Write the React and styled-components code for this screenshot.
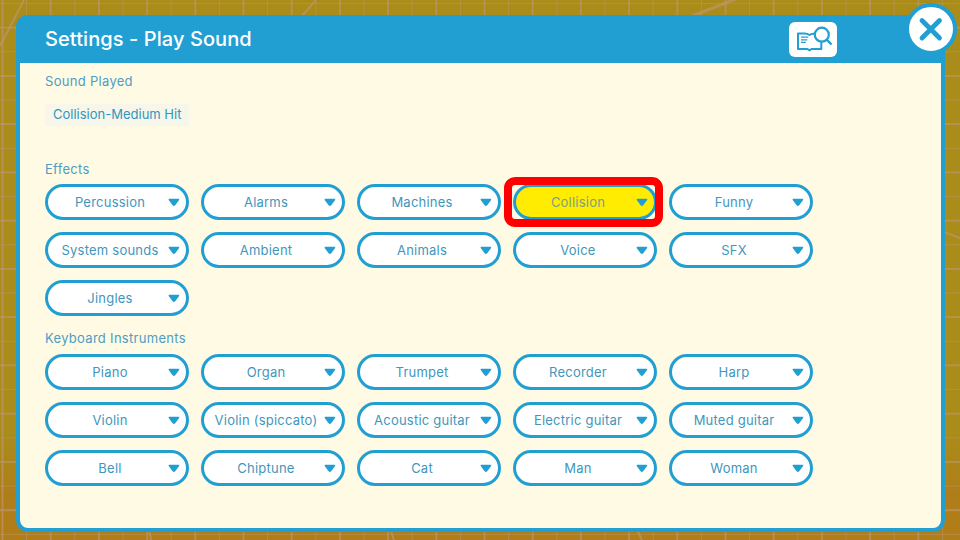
import React from "react";
import styled, { createGlobalStyle } from "styled-components";

const blue = "#219fd3";

const GlobalStyle = createGlobalStyle`
  * { box-sizing: border-box; }
  body { margin: 0; overflow: hidden; }
  button { font: inherit; padding: 0; }
`;

const Screen = styled.main`
  position: relative;
  width: 960px;
  height: 540px;
  padding: 15px 15px 8px 16px;
  background: linear-gradient(#aa8c1b 0%, #aa8c1b 80%, #b07d18 92%, #b07d18 100%);
  font-family: Inter, "Liberation Sans", sans-serif;
  overflow: hidden;
`;

const Backdrop = styled.svg`
  position: absolute;
  inset: 0;
`;

const Panel = styled.section`
  position: relative;
  height: 517px;
  display: flex;
  flex-direction: column;
  border: 4px solid ${blue};
  border-top: 0;
  border-radius: 12px;
  background: ${blue};
`;

const Header = styled.header`
  height: 48px;
  flex: none;
  display: flex;
  align-items: center;
  justify-content: space-between;
  padding: 0 104px 0 25px;
`;

const Title = styled.h1`
  margin: 0;
  color: #fff;
  font-size: 20px;
  line-height: 24px;
  font-weight: 450;
  letter-spacing: 0.08px;
`;

const GuideButton = styled.button`
  width: 48px;
  height: 35px;
  margin-top: 1px;
  border: 0;
  border-radius: 6px;
  background: #fff;
  svg { display: block; }
`;

const Body = styled.div`
  flex: 1;
  padding: 9px 25px 0 25px;
  border-radius: 0 0 8px 8px;
  background: #fffae3;
`;

const Label = styled.h2`
  margin: 0;
  height: 18px;
  color: #4d9dc4;
  font-size: 13px;
  line-height: 18px;
  font-weight: 400;
  letter-spacing: 0.3px;
  white-space: nowrap;
`;

const Played = styled.div`
  width: 144px;
  height: 22px;
  margin: 14px 0 34px;
  padding-left: 8px;
  background: #f6f6ea;
  color: #3096bf;
  font-size: 13px;
  line-height: 21px;
`;

const Grid = styled.div`
  display: grid;
  grid-template-columns: repeat(5, 144px);
  gap: 12px;
  margin: ${(p) => p.$top}px 0 13px;
`;

const Sound = styled.button`
  position: relative;
  height: 36px;
  display: flex;
  align-items: center;
  border: 3px solid ${blue};
  border-radius: 18px;
  background: ${(p) => (p.$selected ? "#ffec00" : "#fff")};
  color: ${(p) => (p.$selected ? "#7aa08a" : "#4296bb")};
  font-size: 13px;
  line-height: 18px;
  letter-spacing: 0.22px;
`;

const Name = styled.span`
  flex: none;
  width: 124px;
  text-align: center;
  white-space: nowrap;
`;

const Arrow = styled.svg`
  flex: none;
  margin: 1px 0 0 -5px;
`;

const Highlight = styled.span`
  position: absolute;
  left: -12px;
  top: -10px;
  width: 159px;
  height: 50px;
  border: 8px solid #ff0000;
  border-radius: 11px;
`;

const CloseButton = styled.button`
  position: absolute;
  left: 905px;
  top: 3px;
  width: 52px;
  height: 52px;
  border: 4px solid ${blue};
  border-radius: 50%;
  background: #fff;
  svg { display: block; }
`;

const effects = ["Percussion", "Alarms", "Machines", "Collision", "Funny", "System sounds", "Ambient", "Animals", "Voice", "SFX", "Jingles"];
const keyboard = ["Piano", "Organ", "Trumpet", "Recorder", "Harp", "Violin", "Violin (spiccato)", "Acoustic guitar", "Electric guitar", "Muted guitar", "Bell", "Chiptune", "Cat", "Man", "Woman"];

function SoundGrid({ names, selected, top }) {
  return (
    <Grid $top={top}>
      {names.map((n) => (
        <Sound key={n} $selected={n === selected}>
          <Name>{n}</Name>
          <Arrow width="14" height="9" viewBox="0 0 14 9">
            <path d="M2.200 1.500H11.600L7.700 6.800Q6.900 7.600 6.100 6.800Z" fill={blue} stroke={blue} strokeWidth="1.300" strokeLinejoin="round" />
          </Arrow>
          {n === selected && <Highlight />}
        </Sound>
      ))}
    </Grid>
  );
}

function Mat() {
  const lines = Array.from({ length: 41 }, (_, i) => i);
  return (
    <Backdrop width="960" height="540" fill="none" stroke="#b9966a">
      {lines.map((i) => (
        <path key={i} d={`M${2.5 + i * 24.1} 0V540`} strokeWidth={i % 2 ? 1 : 1.8} strokeOpacity={i % 2 ? 0.55 : 0.75} />
      ))}
      {lines.slice(0, 23).map((i) => (
        <path key={i} d={`M0 ${3.5 + i * 24.13}H960`} strokeWidth={i % 2 ? 1.8 : 1} strokeOpacity={i % 2 ? 0.75 : 0.55} />
      ))}
      <path d="M24 0L0 46M316 0L301 17M944 232L960 238M149 528L151 540M390 528L394 540M636 528L642 540" strokeWidth="2" strokeOpacity=".75" />
      <path d="M738 -2L690 17" strokeWidth="3" strokeOpacity=".75" />
    </Backdrop>
  );
}

export default function App() {
  return (
    <Screen>
      <GlobalStyle />
      <Mat />
      <Panel>
        <Header>
          <Title>Settings - Play Sound</Title>
          <GuideButton aria-label="Sound guide">
            <svg width="48" height="35" viewBox="0 0 48 35" fill="none" stroke={blue} strokeWidth="2" strokeLinejoin="round">
              <path d="M26 11.800Q22.500 11.200 20.500 13Q18.500 11.500 15.500 11.500H9V27H18.500L20.500 28.300L22.500 27H32.300V20" />
              <path d="M12 15.200H19.300M12 17.800H18.300M12 20.400H16.800" strokeWidth="1.300" />
              <circle cx="32.800" cy="12.700" r="7" fill="#fff" strokeWidth="2.200" />
              <path d="M38 18L42.500 22.500" strokeWidth="2.400" />
            </svg>
          </GuideButton>
        </Header>
        <Body>
          <Label>Sound Played</Label>
          <Played>Collision-Medium Hit</Played>
          <Label>Effects</Label>
          <SoundGrid names={effects} selected="Collision" top={6} />
          <Label>Keyboard Instruments</Label>
          <SoundGrid names={keyboard} top={7} />
        </Body>
      </Panel>
      <CloseButton aria-label="Close">
        <svg width="44" height="44" viewBox="0 0 44 44" fill="none" stroke={blue} strokeWidth="4.800" strokeLinecap="round">
          <path d="M13 13.500L30.500 31M30.500 13.500L13 31" />
        </svg>
      </CloseButton>
    </Screen>
  );
}
